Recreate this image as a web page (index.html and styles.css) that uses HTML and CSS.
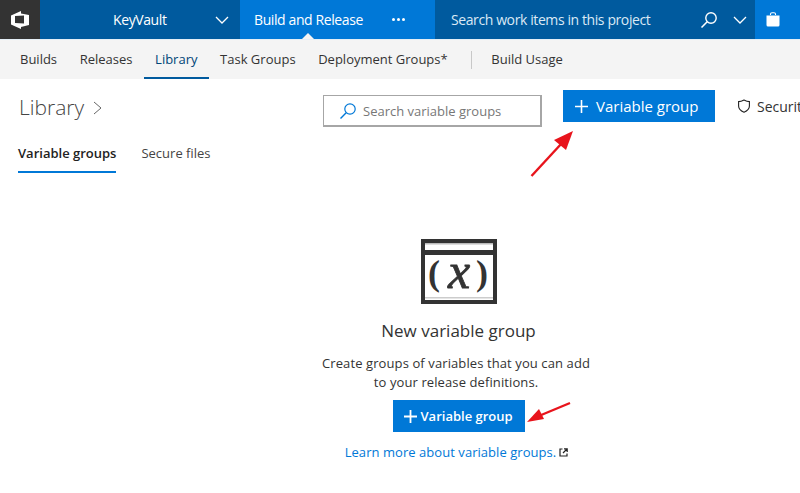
FILE: index.html
```html
<!DOCTYPE html>
<html lang="en">
<head>
    <meta charset="UTF-8">
    <title>Library</title>
    <link rel="stylesheet" href="styles.css">
</head>
<body>
    <div class="top_bar">
        <div class="logo">
            <svg width="20" height="20" viewBox="0 0 20 20"><path d="M1 5.5 L11 1 L11 3.5 L19 5 V15 L11 17 V19 L1 14.5 Z M5 6 L14 5.5 V13.5 L5 13 Z" fill="#fff" fill-rule="evenodd"/></svg>
        </div>
        <div class="project">
            <span>KeyVault</span>
            <svg class="chev" width="14" height="8" viewBox="0 0 14 8"><path d="M1 1 L7 7 L13 1" fill="none" stroke="#fff" stroke-width="1.3"/></svg>
        </div>
        <div class="hub">
            <span class="hub_name">Build and Release</span>
            <span class="dots"><i></i><i></i><i></i></span>
        </div>
        <div class="top_search">
            <span class="top_search_txt">Search work items in this project</span>
            <svg width="18" height="18" viewBox="0 0 18 18"><circle cx="11" cy="7" r="5.2" fill="none" stroke="#fff" stroke-width="1.4"/><path d="M7.2 10.8 L1.5 16.5" stroke="#fff" stroke-width="1.6"/></svg>
            <svg class="chev" width="14" height="8" viewBox="0 0 14 8"><path d="M1 1 L7 7 L13 1" fill="none" stroke="#fff" stroke-width="1.3"/></svg>
        </div>
        <div class="bag">
            <svg width="14" height="15" viewBox="0 0 14 15"><path d="M4.5 3 V2 Q4.5 .7 6 .7 H8 Q9.5 .7 9.5 2 V3" fill="none" stroke="#fff" stroke-width="1.1"/><path d="M.5 3.5 H13.5 V13 Q13.5 14.5 12 14.5 H2 Q.5 14.5 .5 13 Z" fill="#fff"/></svg>
        </div>
    </div>

    <ul class="sub_nav">
        <li>Builds</li>
        <li>Releases</li>
        <li class="active">Library</li>
        <li>Task Groups</li>
        <li>Deployment Groups*</li>
        <li class="sep"></li>
        <li>Build Usage</li>
    </ul>

    <div class="title_row">
        <h1 class="page_title">Library
            <svg width="9" height="14" viewBox="0 0 9 14"><path d="M1 1 L8 7 L1 13" fill="none" stroke="#666" stroke-width="1"/></svg>
        </h1>
        <div class="lib_search">
            <svg width="18" height="18" viewBox="0 0 18 18"><circle cx="11" cy="7" r="5.2" fill="none" stroke="#0078d7" stroke-width="1.2"/><path d="M7.2 10.8 L1.5 16.5" stroke="#0078d7" stroke-width="1.4"/></svg>
            <span>Search variable groups</span>
        </div>
        <div class="add_btn">
            <svg width="13" height="13" viewBox="0 0 13 13"><path d="M6.5 0 V13 M0 6.5 H13" stroke="#fff" stroke-width="1.6"/></svg>
            <span>Variable group</span>
        </div>
        <div class="security">
            <svg width="12" height="14" viewBox="0 0 12 14"><path d="M6 1 Q9 2.6 11.4 2.6 V7 Q11.4 11 6 13.2 Q.6 11 .6 7 V2.6 Q3 2.6 6 1 Z" fill="none" stroke="#222" stroke-width="1.1"/></svg>
            <span>Security</span>
        </div>
    </div>

    <div class="tabs">
        <span class="tab on">Variable groups</span>
        <span class="tab">Secure files</span>
    </div>

    <div class="empty">
        <svg class="empty_icon" width="76" height="65" viewBox="0 0 76 65">
            <rect x="2" y="2" width="72" height="61" fill="#fff" stroke="#333" stroke-width="4"/>
            <rect x="4" y="4" width="68" height="1.5" fill="#bbb"/>
            <rect x="4" y="11" width="68" height="5" fill="#333"/>
            <rect x="4" y="58" width="68" height="1.5" fill="#ccc"/>
            <text x="13" y="46" text-anchor="middle" class="paren">(</text>
            <text x="38" y="49" text-anchor="middle" class="formula_x">x</text>
            <text x="61" y="46" text-anchor="middle" class="paren">)</text>
        </svg>
        <h2 class="empty_title">New variable group</h2>
        <p class="empty_txt">Create groups of variables that you can add<br>to your release definitions.</p>
        <div class="add_btn small">
            <svg width="13" height="13" viewBox="0 0 13 13"><path d="M6.5 0 V13 M0 6.5 H13" stroke="#fff" stroke-width="1.8"/></svg>
            <span>Variable group</span>
        </div>
        <a class="learn" href="javascript:;">Learn more about variable groups.<svg width="9" height="9" viewBox="0 0 9 9"><path d="M3.5 1 H1 V8 H8 V5.5" fill="none" stroke="#222" stroke-width="1.2"/><path d="M4 5 L8 1 M5 .8 H8.2 V4" fill="none" stroke="#222" stroke-width="1.2"/></svg></a>
    </div>

    <!-- red arrows drawn on top of the screenshot -->
    <svg class="arrow arrow_top" width="46" height="50" viewBox="0 0 46 50"><path d="M1.5 47 L32 14" stroke="#e8141c" stroke-width="2.4"/><path d="M43 2 L36 21 L24 11 Z" fill="#e8141c"/></svg>
    <svg class="arrow arrow_btm" width="46" height="24" viewBox="0 0 46 24"><path d="M44 2 L14 14.5" stroke="#e8141c" stroke-width="2.4"/><path d="M1 21 L13 8 L18 18 Z" fill="#e8141c"/></svg>
</body>
</html>
```

FILE: styles.css
```css
*{
    margin: 0;
    padding: 0;
    list-style-type: none;
    box-sizing: border-box;
}
html,body{
    width: 800px;
    height: 493px;
    overflow: hidden;
}
body{
    position: relative;
    background: #fff;
    color: #333;
    font-family: "Open Sans", "Noto Sans", "Liberation Sans", sans-serif;
    font-size: 13px;
}
.top_bar{
    display: flex;
    height: 39px;
    background: #005a9e;
    color: #fff;
    letter-spacing: -0.4px;
}
.logo{
    width: 40px;
    background: #333;
    display: flex;
    align-items: center;
    justify-content: center;
}
.project{
    width: 200px;
    display: flex;
    align-items: center;
    justify-content: space-between;
    padding: 0 11px 0 73px;
    font-size: 14px;
}
.hub{
    width: 195px;
    background: #0078d7;
    display: flex;
    align-items: center;
    padding-left: 14px;
    font-size: 14px;
    position: relative;
}
.hub::after{
    content: "";
    position: absolute;
    left: 62px;
    bottom: 0;
    border: 6px solid transparent;
    border-top: 0;
    border-bottom-color: #f4f4f4;
}
.dots{
    display: flex;
    gap: 2px;
    margin-left: 29px;
}
.dots i{
    width: 3px;
    height: 3px;
    border-radius: 50%;
    background: #fff;
}
.top_search{
    width: 320px;
    display: flex;
    align-items: center;
    padding-left: 16px;
    font-size: 14px;
}
.top_search_txt{
    width: 249px;
    color: #dbe9f5;
}
.top_search .chev{
    margin-left: 15px;
}
.bag{
    width: 45px;
    background: #0078d7;
    display: flex;
    align-items: center;
    padding-left: 11px;
}
.sub_nav{
    display: flex;
    align-items: center;
    height: 40px;
    background: #f4f4f4;
    border-top: 1px solid #e4eef6;
    padding-left: 8.7px;
}
.sub_nav li{
    height: 100%;
    line-height: 39px;
    padding: 0 11.3px;
    color: #333;
}
.sub_nav li.active{
    color: #004578;
    border-bottom: 2px solid #005a9e;
}
.sub_nav li.sep{
    height: 18px;
    width: 1px;
    padding: 0;
    margin: 0 8px 0 12px;
    background: #c8c8c8;
}
.title_row{
    position: relative;
    display: flex;
    align-items: flex-start;
    height: 61px;
    padding: 11px 0 0 19px;
}
.page_title{
    flex: none;
    width: 304px;
    font-size: 21px;
    font-weight: 300;
    line-height: 34px;
    color: #444;
}
.page_title svg{
    margin-left: 3px;
}
.lib_search{
    flex: none;
    width: 219px;
    height: 32px;
    margin-top: 5px;
    border: 1px solid #a6a6a6;
    border-bottom-width: 2px;
    border-right-width: 2px;
    display: flex;
    align-items: center;
    gap: 6px;
    padding-left: 15px;
    color: #777;
}
.add_btn{
    display: flex;
    align-items: center;
    background: #0078d7;
    color: #fff;
}
.title_row .add_btn{
    flex: none;
    width: 152px;
    height: 32px;
    margin-left: 21px;
    gap: 8px;
    padding-left: 12px;
    font-size: 15px;
}
.security{
    flex: none;
    display: flex;
    align-items: center;
    gap: 7px;
    height: 32px;
    margin-left: 23px;
    font-size: 14px;
    white-space: nowrap;
}
.tabs{
    display: flex;
    gap: 25px;
    height: 33px;
    padding-left: 18px;
}
.tab{
    height: 33px;
    line-height: 26px;
    color: #444;
}
.tab.on{
    color: #222;
    font-weight: 600;
    border-bottom: 2px solid #0078d7;
}
.empty{
    display: flex;
    flex-direction: column;
    align-items: center;
    width: 800px;
    padding: 66px 0 0 117px;
}
.paren{
    font-family: "Liberation Serif", serif;
    font-size: 36px;
    font-weight: 700;
    fill: #333;
}
.formula_x{
    font-family: "Liberation Serif", serif;
    font-size: 50px;
    font-style: italic;
    fill: #333;
    stroke: #333;
    stroke-width: 0.8px;
}
.empty_title{
    margin-top: 14px;
    font-size: 17px;
    font-weight: 400;
    line-height: 26px;
    color: #333;
}
.empty_txt{
    margin: 10px 5px 0 0;
    text-align: center;
    line-height: 19px;
    font-size: 13px;
    letter-spacing: 0.1px;
    color: #333;
}
.add_btn.small{
    width: 132px;
    height: 32px;
    margin-top: 8px;
    padding-left: 11px;
    gap: 4px;
    font-weight: 600;
    font-size: 13px;
}
.learn{
    display: flex;
    align-items: center;
    gap: 3px;
    margin: 11px 4px 0 0;
    color: #0078d7;
    text-decoration: none;
    line-height: 19px;
    letter-spacing: 0.05px;
}
.arrow{
    position: absolute;
}
.arrow_top{
    left: 530px;
    top: 129px;
}
.arrow_btm{
    left: 526px;
    top: 401px;
}
```
